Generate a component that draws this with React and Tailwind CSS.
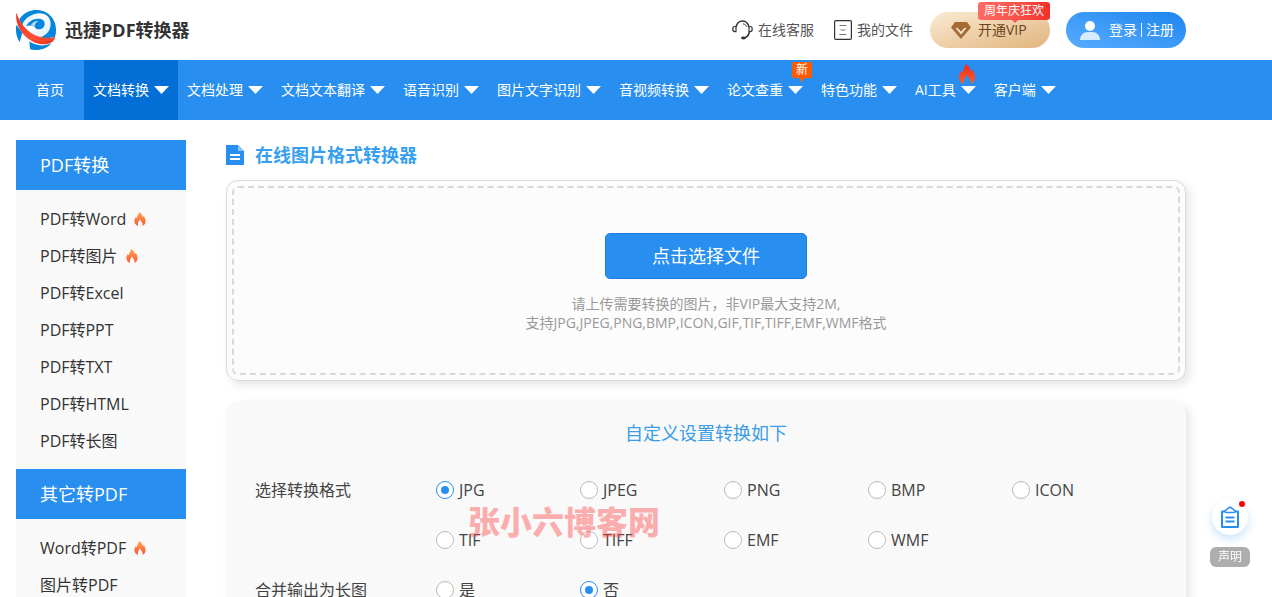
import { useState } from "react";

const navItems = [
  { label: "文档转换", active: true },
  { label: "文档处理" },
  { label: "文档文本翻译" },
  { label: "语音识别" },
  { label: "图片文字识别" },
  { label: "音视频转换" },
  { label: "论文查重", badge: "new" },
  { label: "特色功能" },
  { label: "AI工具", badge: "fire" },
  { label: "客户端" },
];

const sideGroups = [
  {
    title: "PDF转换",
    items: [
      { label: "PDF转Word", hot: true },
      { label: "PDF转图片", hot: true },
      { label: "PDF转Excel" },
      { label: "PDF转PPT" },
      { label: "PDF转TXT" },
      { label: "PDF转HTML" },
      { label: "PDF转长图" },
    ],
  },
  {
    title: "其它转PDF",
    items: [{ label: "Word转PDF", hot: true }, { label: "图片转PDF" }, { label: "Excel转PDF" }],
  },
];

const formats = ["JPG", "JPEG", "PNG", "BMP", "ICON", "TIF", "TIFF", "EMF", "WMF"];

function Logo() {
  return (
    <svg viewBox="0 0 120 120" className="size-10 shrink-0" aria-hidden="true">
      <defs>
        <linearGradient id="logoRed" x1="0" y1="0" x2="1" y2="1">
          <stop offset="0" stopColor="#e8341f" />
          <stop offset="0.6" stopColor="#ff5138" />
          <stop offset="1" stopColor="#f0402c" />
        </linearGradient>
        <linearGradient id="logoP" x1="0" y1="0" x2="1" y2="1">
          <stop offset="0" stopColor="#c3e2f6" />
          <stop offset="0.4" stopColor="#ffffff" />
          <stop offset="1" stopColor="#d8ecf9" />
        </linearGradient>
      </defs>
      <path d="M10 27C24 7 44 0 62 0c34 0 58 27 58 60 0 8-1 14-3 20L60 92 22 60Z" fill="#0486dc" />
      <path d="M1 44c-3 20 0 38 10 52l8-28Z" fill="#0486dc" />
      <path d="M40 94c18 14 44 16 66 6-13 17-38 24-64 18Z" fill="#0486dc" />
      <path
        d="M18 44C28 22 50 10 70 10c21 0 34 14 34 32 0 21-15 37-36 41C48 80 28 64 18 44Z"
        fill="url(#logoP)"
      />
      <path d="M30 48C38 36 50 25 68 26c12 0 19 7 18 17-1 9-8 15-18 15-6 0-10-3-12-8-8-4-17-5-26-2Z" fill="#0486dc" />
      <path d="M44 46c5-8 13-14 24-14-8 4-12 10-12 18-4-2-8-4-12-4Z" fill="#b9dcf5" />
      <path d="M1 8c10 30 32 58 62 70 18 6 38 8 55 2-3 13-12 19-25 22-26 4-53-8-72-31C6 54-2 32 1 8Z" fill="url(#logoRed)" />
      <path d="M44 86c22 10 46 10 70 4-5 6-11 9-20 11-19 3-37-2-50-15Z" fill="#d9301f" opacity=".4" />
    </svg>
  );
}

function Flame({ className, id, top, bottom }) {
  return (
    <svg viewBox="0 0 16 20" className={className} aria-hidden="true">
      <defs>
        <linearGradient id={id} x1="0" y1="0" x2="0" y2="1">
          <stop offset="0" stopColor={top} />
          <stop offset="1" stopColor={bottom} />
        </linearGradient>
      </defs>
      <path
        d="M6.500 0C9.500 1.500 11.600 4 11.800 7.400c.9-.4 1.300-1.100 1.400-1.900C15 8 16 10.500 16 13c0 3.300-1.500 5.600-4.300 7 .5-2.400-.1-4.300-1.500-5.800C9.200 13.100 8.500 12 8.400 10.800 6 12.700 4.600 15.500 5 20 1.700 18.700 0 16.300 0 13c0-2.500 1-4.500 2.200-5.700.3.9.7 1.400 1.300 1.700C3.600 5.500 6.300 3.500 6.500 0Z"
        fill={`url(#${id})`}
      />
    </svg>
  );
}

function Caret() {
  return (
    <svg viewBox="0 0 15 8" className="h-2 w-[15px] shrink-0" aria-hidden="true">
      <path d="M0 0h15L7.500 8Z" fill="#fff" />
    </svg>
  );
}

function Header() {
  return (
    <header className="mx-auto flex h-15 w-full max-w-[1240px] items-center justify-between pr-[70px]">
      <a href="#home" className="flex items-center gap-[9px]">
        <Logo />
        <span className="text-lg font-bold text-[#333]">迅捷PDF转换器</span>
      </a>
      <div className="flex items-center text-sm text-[#555]">
        <a href="#service" className="flex items-center gap-[5px]">
          <svg viewBox="0 0 21 20" className="h-5 w-[21px]" fill="none" stroke="#333" strokeWidth="1.500" aria-hidden="true">
            <path d="M4 7C5 3 7.500 1 10.500 1S16 3 17 7M17.300 12c-.6 3-2 5-4.800 6" />
            <path d="M11 3.800c2 .3 3 1.400 3.500 3" strokeWidth="1" />
            <path d="M4 6.500v5.200H2.600C1.500 11.700.8 10.700.8 9s.7-2.500 1.800-2.500ZM17 6.500v5.200h1.400c1.100 0 1.800-1 1.800-2.700s-.7-2.500-1.800-2.500Z" strokeWidth="1.200" />
            <ellipse cx="11.500" cy="18" rx="2.500" ry="1.400" fill="#333" stroke="none" />
          </svg>
          在线客服
        </a>
        <a href="#files" className="ml-5 flex items-center gap-[5px]">
          <svg viewBox="0 0 18 20" className="h-5 w-[18px]" fill="none" stroke="#333" aria-hidden="true">
            <rect x=".6" y=".6" width="16.800" height="18.800" rx="1.200" strokeWidth="1.200" />
            <path d="M5.500 5.500h7M6.500 10h5M5.500 14.500h7" stroke="#777" strokeWidth="1.200" />
          </svg>
          我的文件
        </a>
        <a
          href="#vip"
          className="relative ml-[17px] flex h-9 w-[120px] items-center gap-[7px] rounded-full bg-linear-to-br from-[#faebd3] to-[#e0b47c] pl-[21px] text-[#6b4420]"
        >
          <svg viewBox="0 0 20 17" className="h-[17px] w-5" aria-hidden="true">
            <path d="M4 0h12l4 5.500L10 17 0 5.500Z" fill="#a56c35" />
            <path d="M4.500 6 10 12.500 15.500 6l-1.800-.2L10 9.800 6.300 5.800Z" fill="#fbead1" />
          </svg>
          开通VIP
          <span className="absolute -top-[10px] left-12 flex h-[18px] w-[72px] items-center justify-center rounded-[3px] bg-linear-to-r from-[#ff6d66] to-[#f2302b] text-xs text-white">
            周年庆狂欢
            <svg viewBox="0 0 6 3" className="absolute top-full left-[34px] h-[3px] w-[6px]" aria-hidden="true">
              <path d="M0 0h6L3 3Z" fill="#fa5650" />
            </svg>
          </span>
        </a>
        <a
          href="#login"
          className="ml-4 flex h-9 w-[120px] items-center gap-[9px] rounded-full bg-linear-to-tr from-[#57adff] to-[#1a85ee] pl-[14px] text-white"
        >
          <svg viewBox="0 0 20 19" className="h-[19px] w-5" aria-hidden="true">
            <circle cx="10" cy="5" r="5" fill="#fff" />
            <path d="M0 19c0-5 3.500-8 8-8h4c4.500 0 8 3 8 8Z" fill="#d7ebff" />
          </svg>
          <span className="flex items-center gap-1">
            登录
            <i className="h-[14px] w-px bg-white" />
            注册
          </span>
        </a>
      </div>
    </header>
  );
}

function Nav() {
  return (
    <nav className="bg-[#288ff0] text-sm text-white">
      <div className="mx-auto flex h-15 max-w-[1240px]">
        <a href="#index" className="flex items-center px-5">
          首页
        </a>
        {navItems.map((item) => (
          <a
            key={item.label}
            href={`#${item.label}`}
            className={`relative flex items-center gap-[5px] pr-[9px] pl-[9px] whitespace-nowrap ${item.active ? "bg-[#036fd6]" : ""}`}
          >
            {item.label}
            <Caret />
            {item.badge === "new" && (
              <span className="absolute top-[2px] right-0 flex h-4 w-5 items-center justify-center rounded-xs bg-[#ff5a00] text-xs">
                新
                <svg viewBox="0 0 5 4" className="absolute top-full left-2 h-1 w-[5px]" aria-hidden="true">
                  <path d="M0 0h5L0 4Z" fill="#ff5a00" />
                </svg>
              </span>
            )}
            {item.badge === "fire" && (
              <Flame id="navFlame" top="#f5281a" bottom="#ff5a2b" className="absolute top-1 right-[10px] h-5 w-4" />
            )}
          </a>
        ))}
      </div>
    </nav>
  );
}

function Sidebar() {
  return (
    <aside className="w-[170px] shrink-0 bg-[#f9f9f9]">
      {sideGroups.map((group) => (
        <section key={group.title}>
          <h2 className="flex h-[50px] items-center bg-[#288ff0] pl-6 text-lg text-white">{group.title}</h2>
          <ul className="py-[10px]">
            {group.items.map((item) => (
              <li key={item.label}>
                <a href={`#${item.label}`} className="flex h-[37px] items-center gap-2 pl-6 text-base text-[#333]">
                  {item.label}
                  {item.hot && (
                    <Flame id={`hot-${item.label}`} top="#ffa552" bottom="#ff5430" className="h-[14px] w-3" />
                  )}
                </a>
              </li>
            ))}
          </ul>
        </section>
      ))}
    </aside>
  );
}

function Radio({ name, label, checked, onChange }) {
  return (
    <label className="flex h-[50px] items-center gap-[5px]">
      <input
        type="radio"
        name={name}
        value={label}
        checked={checked}
        onChange={() => onChange(label)}
        className="grid size-[18px] shrink-0 appearance-none place-content-center rounded-full border border-[#bbb] bg-white before:size-2 before:rounded-full checked:border-[#288ff0] checked:before:bg-[#288ff0]"
      />
      {label}
    </label>
  );
}

function Settings() {
  const [format, setFormat] = useState("JPG");
  const [merge, setMerge] = useState("否");
  return (
    <section className="relative mt-5 rounded-xl bg-[#f9f9f9] px-[29px] pt-4 pb-8 text-base text-[#444] shadow-[4px_4px_10px_rgba(0,0,0,0.1)]">
      <h2 className="text-center text-lg leading-8 text-[#3a9de6]">自定义设置转换如下</h2>
      <div role="radiogroup" aria-labelledby="format-label" className="mt-4 flex">
        <span id="format-label" className="w-[181px] shrink-0 leading-[50px]">
          选择转换格式
        </span>
        <div className="grid grid-cols-[repeat(5,144px)]">
          {formats.map((f) => (
            <Radio key={f} name="format" label={f} checked={format === f} onChange={setFormat} />
          ))}
        </div>
      </div>
      <div role="radiogroup" aria-labelledby="merge-label" className="flex">
        <span id="merge-label" className="w-[181px] shrink-0 leading-[50px]">
          合并输出为长图
        </span>
        <div className="grid grid-cols-[repeat(5,144px)]">
          {["是", "否"].map((v) => (
            <Radio key={v} name="merge" label={v} checked={merge === v} onChange={setMerge} />
          ))}
        </div>
      </div>
      <span className="pointer-events-none absolute top-[103px] left-[242px] text-[32px] leading-9 font-black text-[#ff4d4d]/45">
        张小六博客网
      </span>
    </section>
  );
}

function Main() {
  return (
    <main className="min-w-0 flex-1">
      <h1 className="mb-[10px] flex h-[30px] items-center gap-[11px] text-lg font-bold text-[#369ff0]">
        <svg viewBox="0 0 18 20" className="h-5 w-[18px]" aria-hidden="true">
          <path d="M0 0h12l6 6v14H0Z" fill="#288ff0" />
          <path d="M12 0l6 6h-6Z" fill="#8cc4f8" />
          <path d="M4 9h10v2H4ZM4 13h10v2H4Z" fill="#fff" />
        </svg>
        在线图片格式转换器
      </h1>
      <div className="rounded-xl border border-[#dadada] bg-[#fcfcfc] p-[5px] shadow-[4px_4px_10px_rgba(0,0,0,0.1)]">
        <div className="flex flex-col items-center rounded-md border-2 border-dashed border-[#d9d9d9] pt-[45px] pb-[41px]">
          <button type="button" className="h-[46px] w-[202px] rounded-[5px] border border-[#1c7fdc] bg-[#288ff0] text-lg text-white">
            点击选择文件
          </button>
          <p className="mt-[15px] text-center text-sm leading-[19px] text-[#999]">
            请上传需要转换的图片，非VIP最大支持2M,
            <br />
            支持JPG,JPEG,PNG,BMP,ICON,GIF,TIF,TIFF,EMF,WMF格式
          </p>
        </div>
      </div>
      <Settings />
    </main>
  );
}

function FloatingTools() {
  return (
    <div className="fixed right-[22px] bottom-[30px] flex flex-col items-center gap-3">
      <button
        type="button"
        aria-label="反馈"
        className="relative flex size-9 items-center justify-center rounded-full bg-white shadow-[0_4px_8px_rgba(40,143,240,0.25)]"
      >
        <svg viewBox="0 0 18 22" className="h-[22px] w-[18px]" fill="none" stroke="#288ff0" strokeLinejoin="round" aria-hidden="true">
          <path d="M4 5.500H1V21h16V5.500h-3" strokeWidth="2" />
          <path d="M3.500 5 7 2.300C8.200 1.200 9.800 1.200 11 2.300L14.500 5 13 6.500H5Z" strokeWidth="1.500" />
          <path d="M4.500 11.500h9M4.500 15.500h9" strokeWidth="2" />
        </svg>
        <span className="absolute top-[2px] right-[3px] size-[6px] rounded-full bg-[#f00]" />
      </button>
      <button type="button" className="h-5 w-10 rounded-md bg-[#adadad] text-xs text-white">
        声明
      </button>
    </div>
  );
}

export default function App() {
  return (
    <div className="h-screen overflow-x-hidden overflow-y-auto bg-white font-['Open_Sans','Noto_Sans_CJK_SC',sans-serif] [scrollbar-width:none]">
      <Header />
      <Nav />
      <div className="mx-auto flex max-w-[1240px] gap-10 pt-5 pr-[70px]">
        <Sidebar />
        <Main />
      </div>
      <FloatingTools />
    </div>
  );
}
